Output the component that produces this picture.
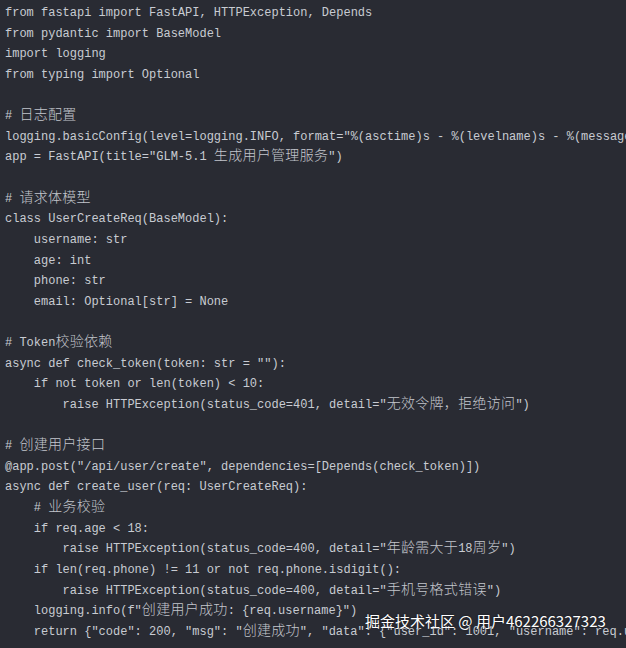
import React from 'react';

// 代码行，按截图原样
const CODE_LINES = [
  'from fastapi import FastAPI, HTTPException, Depends',
  'from pydantic import BaseModel',
  'import logging',
  'from typing import Optional',
  '',
  '# 日志配置',
  'logging.basicConfig(level=logging.INFO, format="%(asctime)s - %(levelname)s - %(message)s")',
  'app = FastAPI(title="GLM-5.1 生成用户管理服务")',
  '',
  '# 请求体模型',
  'class UserCreateReq(BaseModel):',
  '    username: str',
  '    age: int',
  '    phone: str',
  '    email: Optional[str] = None',
  '',
  '# Token校验依赖',
  'async def check_token(token: str = ""):',
  '    if not token or len(token) < 10:',
  '        raise HTTPException(status_code=401, detail="无效令牌，拒绝访问")',
  '',
  '# 创建用户接口',
  '@app.post("/api/user/create", dependencies=[Depends(check_token)])',
  'async def create_user(req: UserCreateReq):',
  '    # 业务校验',
  '    if req.age < 18:',
  '        raise HTTPException(status_code=400, detail="年龄需大于18周岁")',
  '    if len(req.phone) != 11 or not req.phone.isdigit():',
  '        raise HTTPException(status_code=400, detail="手机号格式错误")',
  '    logging.info(f"创建用户成功: {req.username}")',
  '    return {"code": 200, "msg": "创建成功", "data": {"user_id": 1001, "username": req.username}}',
];

const CJK_RE = /([\u3000-\u9fff\uff00-\uffef]+)/;

const CodeLine = ({ text }) => {
  const parts = text.split(CJK_RE).filter(Boolean);
  return (
    <div className="h-[20.63px] whitespace-pre">
      {parts.map((part, i) =>
        CJK_RE.test(part) ? (
          <span
            key={i}
            className="text-[14px] leading-none tracking-[0.3px] font-light text-[#c3c6cd] font-['Noto_Sans_CJK_SC',sans-serif]"
          >
            {part}
          </span>
        ) : (
          <span key={i}>{part}</span>
        )
      )}
    </div>
  );
};

const App = () => {
  return (
    <div className="relative w-[626px] h-[648px] overflow-hidden bg-[#292b33]">
      <div className="pt-[3px] pl-[5px] text-[12px] leading-[20.63px] text-[#c8cbd2] font-['Liberation_Mono','Noto_Sans_CJK_SC',monospace]">
        {CODE_LINES.map((line, i) => (
          <CodeLine key={i} text={line} />
        ))}
      </div>

      <div className="absolute left-[365px] top-[611px] whitespace-nowrap text-[15px] leading-[20px] text-white font-['Noto_Sans_CJK_SC',sans-serif] [text-shadow:0_0_2px_rgba(0,0,0,0.6)]">
        掘金技术社区 @ 用户462266327323
      </div>
    </div>
  );
};

export default App;
